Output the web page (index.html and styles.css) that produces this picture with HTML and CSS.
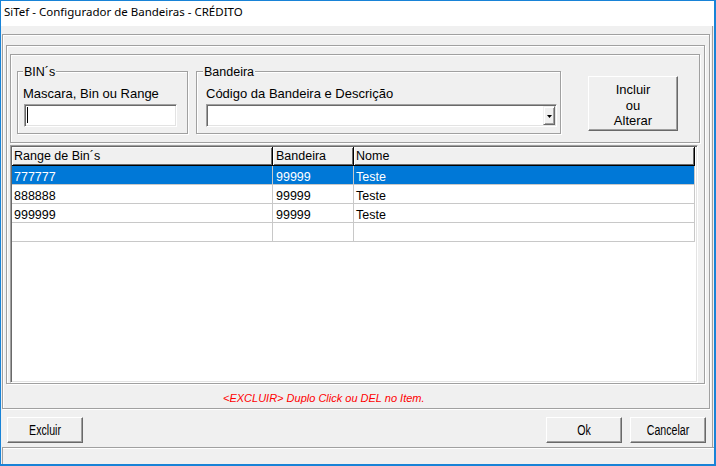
FILE: index.html
```html
<!DOCTYPE html>
<html lang="pt">
<head>
<meta charset="utf-8">
<title>SiTef - Configurador de Bandeiras - CRÉDITO</title>
<link rel="stylesheet" href="styles.css">
</head>
<body>
<div class="window">
  <div class="titlebar"><span class="title">SiTef - Configurador de Bandeiras - CRÉDITO</span></div>
  <div class="client">
    <div class="body">
      <div class="r1">
        <div class="r2">
          <div class="r3">
            <div class="group g-bin">
              <span class="caption">BIN´s</span>
              <span class="label">Mascara, Bin ou Range</span>
              <div class="edit"><span class="caret"></span></div>
            </div>
            <div class="group g-band">
              <span class="caption">Bandeira</span>
              <span class="label">Código da Bandeira e Descrição</span>
              <div class="combo">
                <span class="drop"><svg width="5" height="3" viewBox="0 0 5 3"><path d="M0 0H5L2.5 3Z" fill="#000"/></svg></span>
              </div>
            </div>
            <button class="btn btn-incluir">Incluir<br>ou<br>Alterar</button>
          </div>
          <div class="grid">
            <div class="row head">
              <div class="cell c1">Range de Bin´s</div>
              <div class="cell c2">Bandeira</div>
              <div class="cell c3">Nome</div>
            </div>
            <div class="row sel">
              <div class="cell c1">777777</div>
              <div class="cell c2">99999</div>
              <div class="cell c3">Teste</div>
            </div>
            <div class="row">
              <div class="cell c1">888888</div>
              <div class="cell c2">99999</div>
              <div class="cell c3">Teste</div>
            </div>
            <div class="row">
              <div class="cell c1">999999</div>
              <div class="cell c2">99999</div>
              <div class="cell c3">Teste</div>
            </div>
            <div class="row">
              <div class="cell c1"></div>
              <div class="cell c2"></div>
              <div class="cell c3"></div>
            </div>
          </div>
        </div>
        <div class="hint">&lt;EXCLUIR&gt; Duplo Click ou DEL no Item.</div>
      </div>
      <div class="actions">
        <button class="btn btn-small"><span class="narrow">Excluir</span></button>
        <span class="spacer"></span>
        <button class="btn btn-small"><span class="narrow">Ok</span></button>
        <button class="btn btn-small"><span class="narrow">Cancelar</span></button>
      </div>
    </div>
    <div class="status"></div>
  </div>
</div>
</body>
</html>
```
FILE: styles.css
```css
* { box-sizing: border-box; }
html, body { margin: 0; padding: 0; }
body {
  width: 716px;
  height: 466px;
  overflow: hidden;
  background: #fff;
  font-family: "Liberation Sans", Arial, sans-serif;
  color: #000;
}
.window {
  width: 716px;
  height: 466px;
  border: 1px solid #1883d7;
  border-right-width: 2px;
  border-bottom-width: 2px;
  display: flex;
  flex-direction: column;
}
.titlebar {
  height: 25px;
  flex: none;
  background: #fff;
  padding-left: 3px;
  font-family: "Noto Sans", sans-serif;
  font-size: 11.5px;
  line-height: 22px;
  white-space: nowrap;
}
.client {
  flex: 1;
  background: #f0f0f0;
  display: flex;
  flex-direction: column;
}
.body {
  height: 421px;
  width: 712px;
  flex: none;
  border-right: 1px solid #a0a0a0;
  padding-top: 8px;
  display: flex;
  flex-direction: column;
}
.r1 {
  margin: 0 2px 0 1px;
  height: 375px;
  flex: none;
  border: 1px solid #a0a0a0;
  box-shadow: inset 1px 1px 0 #fff, 1px 1px 0 #fff;
  display: flex;
  flex-direction: column;
}
.r2 {
  margin: 10px 4px 0 3px;
  height: 339px;
  flex: none;
  border: 1px solid #a0a0a0;
  box-shadow: inset 1px 1px 0 #fff, 1px 1px 0 #fff;
  display: flex;
  flex-direction: column;
}
.r3 {
  margin: 8px 4px 0 3px;
  height: 89px;
  flex: none;
  border: 1px solid #a0a0a0;
  box-shadow: inset 1px 1px 0 #fff, 1px 1px 0 #fff;
  display: flex;
  align-items: flex-start;
}
.group {
  display: flex;
  flex-direction: column;
  height: 63px;
  margin-top: 16px;
  border: 1px solid #a0a0a0;
  box-shadow: inset 1px 1px 0 #fff, 1px 1px 0 #fff;
}
.g-bin { width: 171px; margin-left: 6px; }
.g-band { width: 365px; margin-left: 8px; }
.caption {
  align-self: flex-start;
  margin: -7px 0 0 5px;
  padding: 0 1px;
  background: #f0f0f0;
  font-size: 12.5px;
  line-height: 14px;
}
.g-band .caption { margin-left: 6px; }
.label {
  margin: 7px 0 0 5px;
  font-size: 13px;
  line-height: 15px;
  white-space: nowrap;
}
.g-band .label { margin-left: 9px; }
.edit, .combo {
  margin: 3px 0 0 6px;
  height: 23px;
  background: #fff;
  border: 1px solid;
  border-color: #a0a0a0 #fff #fff #a0a0a0;
  box-shadow: inset 1px 1px 0 #696969, inset -1px -1px 0 #e3e3e3;
  padding: 1px;
}
.edit { width: 153px; }
.caret {
  display: block;
  width: 1px;
  height: 16px;
  margin: 1px 0 0 1px;
  background: #000;
}
.combo {
  width: 351px;
  margin-left: 9px;
  display: flex;
  justify-content: flex-end;
}
.drop {
  width: 12px;
  height: 19px;
  background: #f0f0f0;
  border: 1px solid;
  border-color: #f0f0f0 #696969 #696969 #f0f0f0;
  box-shadow: inset 1px 1px 0 #fff, inset -1px -1px 0 #a0a0a0;
  display: flex;
  align-items: center;
  justify-content: center;
  padding-top: 1px;
}
.drop svg { display: block; }
.btn {
  margin: 0;
  padding: 0;
  background: #f0f0f0;
  border: 1px solid;
  border-color: #fff #696969 #696969 #fff;
  box-shadow: inset -1px -1px 0 #a0a0a0;
  color: #000;
  font-family: "Liberation Sans", Arial, sans-serif;
  text-align: center;
}
.btn-incluir {
  width: 90px;
  height: 55px;
  margin: 21px 0 0 27px;
  padding-top: 4px;
  font-size: 13px;
  line-height: 15.5px;
}
.grid {
  margin: 2px 6px 0 3px;
  height: 238px;
  flex: none;
  background: #fff;
  border: 1px solid;
  border-color: #a0a0a0 #fff #fff #a0a0a0;
  box-shadow: inset 1px 1px 0 #696969, inset -1px -1px 0 #e3e3e3;
  padding: 1px;
}
.row { display: flex; }
.cell {
  height: 19px;
  border-right: 1px solid #c8c8c8;
  border-bottom: 1px solid #c8c8c8;
  padding: 2px 0 0 2px;
  font-size: 12.5px;
  line-height: 18px;
  white-space: nowrap;
}
.c1 { width: 261px; }
.c2 { width: 81px; padding-left: 3px; }
.c3 { width: 341px; }
.head .cell {
  background: #f0f0f0;
  border-right-color: #000;
  border-bottom-color: #000;
  box-shadow: inset 1px 1px 0 #fff, inset -1px -1px 0 #696969;
  padding-top: 1px;
  line-height: 17px;
}
.sel .cell {
  background: #0078d7;
  color: #fff;
}
.hint {
  margin: 8px 0 0 220px;
  font-style: italic;
  font-size: 11px;
  line-height: 13px;
  color: #ff0000;
  white-space: nowrap;
}
.actions {
  display: flex;
  padding: 8px 6px 0 6px;
  gap: 8px;
}
.spacer { flex: 1; }
.btn-small {
  width: 76px;
  height: 26px;
  font-size: 14px;
}
.narrow {
  display: inline-block;
  transform: scaleX(0.76);
}
.status {
  flex: 1;
  margin-left: 1px;
  border-top: 1px solid #a0a0a0;
  border-left: 1px solid #a0a0a0;
  box-shadow: inset 0 1px 0 #fff;
}
```
